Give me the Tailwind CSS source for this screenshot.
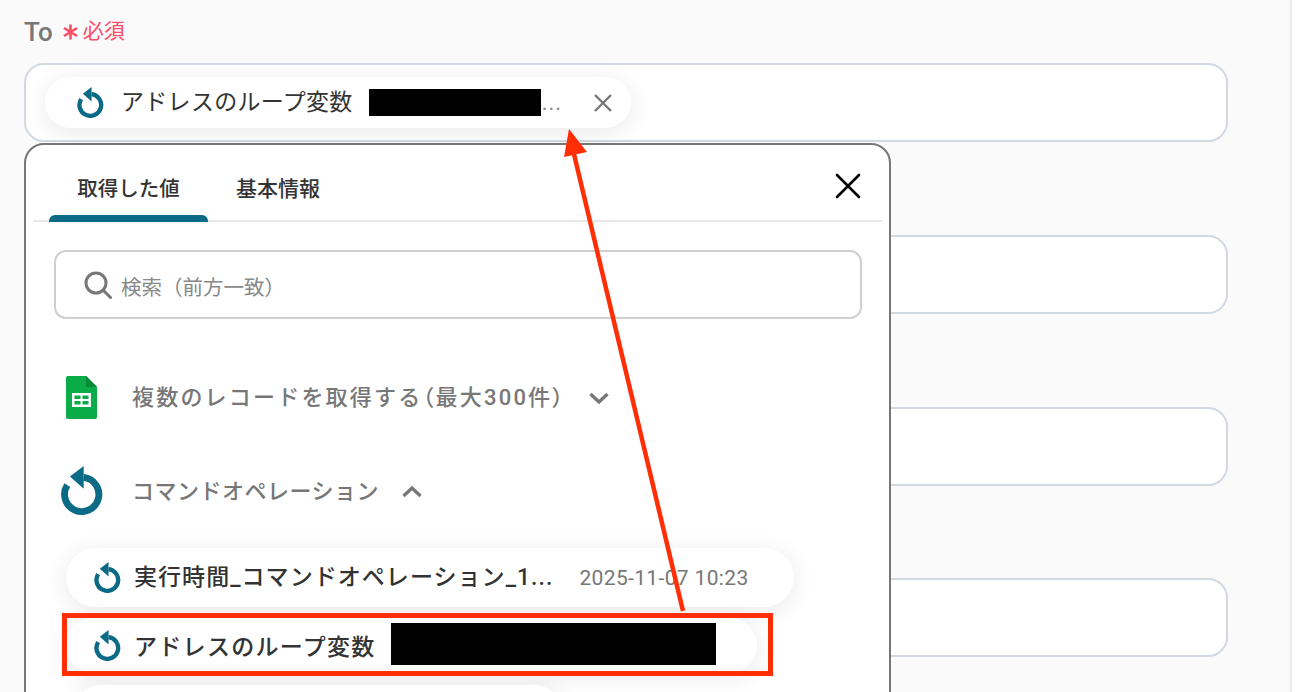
<!DOCTYPE html>
<html lang="ja">
<head>
    <meta charset="UTF-8">
    <title>To</title>
    <script src="https://cdn.jsdelivr.net/npm/@tailwindcss/browser@4"></script>
</head>
<body class="bg-white overflow-hidden font-['Roboto','Noto_Sans_CJK_JP',sans-serif]">
    <div class="relative w-[1292px] h-[692px] overflow-hidden bg-[#fafafa] border-r-2 border-[#ececec]">

        <!-- Form fields -->
        <div class="pl-6 w-[1228px]">
            <div class="h-[63px] pt-[17px] flex items-start">
                <span class="text-[26px] leading-[30px] font-medium text-[#777]">To</span>
                <svg class="ml-[9px] mt-[7px]" width="17" height="16" viewBox="0 0 17 16" fill="none" stroke="#fb4d68" stroke-width="2.6"><path d="M8.5 0.5V15.5M2 4L15 12M15 4L2 12"/></svg>
                <span class="ml-[4px] text-[21px] leading-[28px] text-[#fb4d68]">必須</span>
            </div>
            <div class="h-[79px] rounded-[20px] border-2 border-[#d3d9e1] bg-white pl-[19px] pt-[12px]">
                <div class="w-[586px] h-[51px] rounded-full bg-white shadow-[0_4px_24px_rgba(0,0,0,0.09)] flex items-center pl-[32px]">
                    <svg width="27" height="31" viewBox="-21 -29 42 50"><path d="M1.7 -17.4A17.5 17.5 0 1 1 -15 -9.5" fill="none" stroke="#0b6a85" stroke-width="7"/><path d="M1.7 -29L-12.3 -18.3L1.7 -5.7Z" fill="#0b6a85"/></svg>
                    <span class="ml-[17px] text-[23px] tracking-[0.3px] leading-[30px] text-[#333]">アドレスのループ変数</span>
                    <span class="ml-[16px] w-[172px] h-[27px] bg-black"></span>
                    <span class="ml-[1px] text-[22px] tracking-[1px] leading-[24px] text-[#888]">...</span>
                    <svg class="ml-[31px]" width="20" height="20" viewBox="0 0 20 20" fill="none" stroke="#777" stroke-width="2.4"><path d="M2 2L18 18M18 2L2 18"/></svg>
                </div>
            </div>
            <div class="h-[79px] mt-[93px] rounded-[20px] border-2 border-[#d3d9e1] bg-white"></div>
            <div class="h-[79px] mt-[93px] rounded-[20px] border-2 border-[#d3d9e1] bg-white"></div>
            <div class="h-[79px] mt-[92px] rounded-[20px] border-2 border-[#d3d9e1] bg-white"></div>
        </div>

        <!-- Value picker popup -->
        <div class="absolute left-6 top-[143px] w-[867px] h-[600px] rounded-[20px] border-2 border-[#777] bg-white">
            <div class="relative mx-[7px] h-[77px] border-b-2 border-[#e8e8e8] flex">
                <div class="relative w-[159px] ml-[16px] pt-[29px] text-center text-[20.5px] leading-[30px] font-medium text-[#333]">
                    取得した値
                    <span class="absolute left-0 right-0 -bottom-[2px] h-[7px] rounded-t-[6px] bg-[#0b6a85]"></span>
                </div>
                <div class="ml-[28px] pt-[29px] text-[21px] leading-[30px] font-medium text-[#333]">基本情報</div>
                <svg class="ml-auto mr-[21px] mt-[28px]" width="26" height="26" viewBox="0 0 26 26" fill="none" stroke="#000" stroke-width="2.6" stroke-linecap="round"><path d="M2 2L24 24M24 2L2 24"/></svg>
            </div>

            <div class="ml-[28px] mt-[28px] w-[808px] h-[69px] rounded-[12px] border-2 border-[#cfcfcf] flex items-center pl-[28px]">
                <svg width="28" height="28" viewBox="0 0 28 28" fill="none" stroke="#777" stroke-width="3"><circle cx="12" cy="12" r="10"/><path d="M19 19L26.5 26.5" stroke-linecap="round"/></svg>
                <span class="ml-[9px] mt-[6px] text-[20.5px] leading-[28px] text-[#888]">検索（前方一致）</span>
            </div>

            <div class="ml-[40px] mt-[56px] h-[44px] flex items-center">
                <svg width="31" height="43" viewBox="0 0 31 43"><path d="M2 0H20L31 11V41a2 2 0 0 1-2 2H2a2 2 0 0 1-2-2V2a2 2 0 0 1 2-2Z" fill="#0aac47"/><path d="M20 0L31 11H20Z" fill="#078a38"/><path d="M6 17H25V31H6Z" fill="#fff"/><path d="M8.5 19.5H14.5V23H8.5ZM16.5 19.5H22.5V23H16.5ZM8.5 25H14.5V28.5H8.5ZM16.5 25H22.5V28.5H16.5Z" fill="#0aac47"/></svg>
                <span class="ml-[35px] mt-[2px] text-[22px] tracking-[2.2px] leading-[30px] font-medium text-[#777]">複数のレコードを取得する<span class="[font-feature-settings:'palt']">（</span>最大300件<span class="[font-feature-settings:'palt']">）</span></span>
                <svg class="ml-[22px] mt-[2px]" width="22" height="14" viewBox="0 0 22 14" fill="none" stroke="#777" stroke-width="3.4"><path d="M2.5 3L11 11L19.5 3"/></svg>
            </div>

            <div class="ml-[35px] mt-[46px] h-[50px] flex items-center">
                <svg width="42" height="49" viewBox="-21 -29 42 50"><path d="M1.7 -17.4A17.5 17.5 0 1 1 -15 -9.5" fill="none" stroke="#0b6a85" stroke-width="7"/><path d="M1.7 -29L-12.3 -18.3L1.7 -5.7Z" fill="#0b6a85"/></svg>
                <span class="ml-[29px] mt-[4px] text-[22px] tracking-[0.5px] leading-[30px] font-medium text-[#777]">コマンドオペレーション</span>
                <svg class="ml-[22px] mt-[4px]" width="22" height="14" viewBox="0 0 22 14" fill="none" stroke="#777" stroke-width="3.4"><path d="M2.5 11L11 3L19.5 11"/></svg>
            </div>

            <div class="ml-[40px] mt-[33px] w-[728px] h-[59px] rounded-full bg-white shadow-[0_4px_24px_rgba(0,0,0,0.09)] flex items-center pl-[28px]">
                <svg width="27" height="31" viewBox="-21 -29 42 50"><path d="M1.7 -17.4A17.5 17.5 0 1 1 -15 -9.5" fill="none" stroke="#0b6a85" stroke-width="7"/><path d="M1.7 -29L-12.3 -18.3L1.7 -5.7Z" fill="#0b6a85"/></svg>
                <span class="ml-[13px] text-[23px] tracking-[1.05px] leading-[30px] font-medium text-[#333]">実行時間_コマンドオペレーション_1...</span>
                <span class="ml-[26px] text-[21px] tracking-[0.35px] leading-[28px] text-[#777]">2025-11-07 10:23</span>
            </div>

            <div class="ml-[40px] mt-[11px] w-[691px] h-[55px] rounded-full bg-white shadow-[0_4px_24px_rgba(0,0,0,0.09)] flex items-center pl-[28px]">
                <svg width="27" height="31" viewBox="-21 -29 42 50"><path d="M1.7 -17.4A17.5 17.5 0 1 1 -15 -9.5" fill="none" stroke="#0b6a85" stroke-width="7"/><path d="M1.7 -29L-12.3 -18.3L1.7 -5.7Z" fill="#0b6a85"/></svg>
                <span class="ml-[13px] mt-[4px] text-[23px] tracking-[1.3px] leading-[30px] font-medium text-[#333]">アドレスのループ変数</span>
                <span class="ml-[15px] mb-[3px] w-[325px] h-[42px] bg-black"></span>
            </div>

            <div class="ml-[48px] mt-[12px] w-[488px] h-[55px] rounded-full bg-white shadow-[0_4px_24px_rgba(0,0,0,0.09)]"></div>
        </div>

        <!-- Annotations -->
        <div class="absolute left-[62px] top-[613px] w-[711px] h-[63px] border-[5px] border-[#ff2e05]"></div>
        <svg class="absolute left-0 top-0" width="1292" height="692" fill="none">
            <path d="M683 611L573 150" stroke="#ff2e05" stroke-width="4.5"/>
            <path d="M569 129L564 157L587 152Z" fill="#ff2e05"/>
        </svg>
    </div>
</body>
</html>
